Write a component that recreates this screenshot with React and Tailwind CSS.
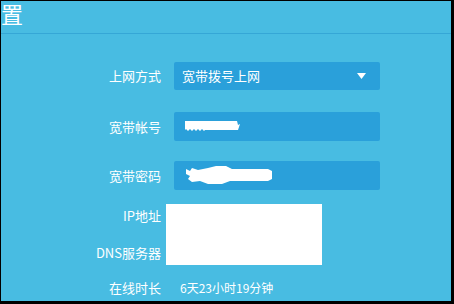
export default function App() {
  const font = { fontFamily: '"Noto Sans CJK SC", "Noto Sans", sans-serif' };
  return (
    <div className="w-[454px] h-[304px] bg-black pt-px pl-px pr-[3px] pb-[3px]" style={font}>
      <div className="h-full bg-[#48bce2] flex flex-col overflow-hidden text-white">
        <div className="h-[33px] border-b border-[#35a7d6] overflow-hidden flex items-center shrink-0">
          <span className="text-[22px] leading-none ml-[-22px] -mt-[8px]">设置</span>
        </div>

        <div className="flex items-center mt-[28px] h-[28px]">
          <div className="w-[160px] text-right text-[13px]">上网方式</div>
          <div className="ml-[13px] w-[206px] h-full bg-[#2aa0da] rounded-[2px] flex items-center justify-between pl-[8px] pr-[14px] text-[13px]">
            <span>宽带拨号上网</span>
            <svg width="9" height="6" viewBox="0 0 9 6"><path d="M0 0H9L4.5 6Z" fill="white" /></svg>
          </div>
        </div>

        <div className="flex items-center mt-[22px] h-[29px]">
          <div className="w-[160px] text-right text-[13px]">宽带帐号</div>
          <div className="ml-[13px] w-[206px] h-full bg-[#2aa0da] rounded-[2px] flex items-center pl-[11px]">
            <svg width="56" height="12" viewBox="0 0 56 12">
              <path d="M0 0H52L53 4L55 3L53 9H20L19 10L17 8L15 10L13 8L11 10L9 8L7 10L5 8L3 10L1 8L0 9Z" fill="white" />
            </svg>
          </div>
        </div>

        <div className="flex items-center mt-[20px] h-[29px]">
          <div className="w-[160px] text-right text-[13px]">宽带密码</div>
          <div className="ml-[13px] w-[206px] h-full bg-[#2aa0da] rounded-[2px] flex items-center pl-[12px]">
            <svg width="88" height="19" viewBox="0 0 88 19">
              <path d="M0 3L4 5L6 2L12 4L22 2L30 0H40L46 3L82 3L86 5L86 13L82 15L44 15L36 18L22 18L14 15L6 16L2 13L4 10L0 8Z" fill="white" />
            </svg>
          </div>
        </div>

        <div className="flex mt-[14px]">
          <div className="w-[160px] text-right text-[13px] flex flex-col">
            <span className="mt-[2px]">IP地址</span>
            <span className="mt-[17px]">DNS服务器</span>
          </div>
          <div className="ml-[5px] w-[156px] h-[61px] bg-white"></div>
        </div>

        <div className="flex items-center mt-[13px] h-[20px]">
          <div className="w-[160px] text-right text-[13px]">在线时长</div>
          <div className="ml-[19px] text-[12px]">6天23小时19分钟</div>
        </div>
      </div>
    </div>
  );
}
